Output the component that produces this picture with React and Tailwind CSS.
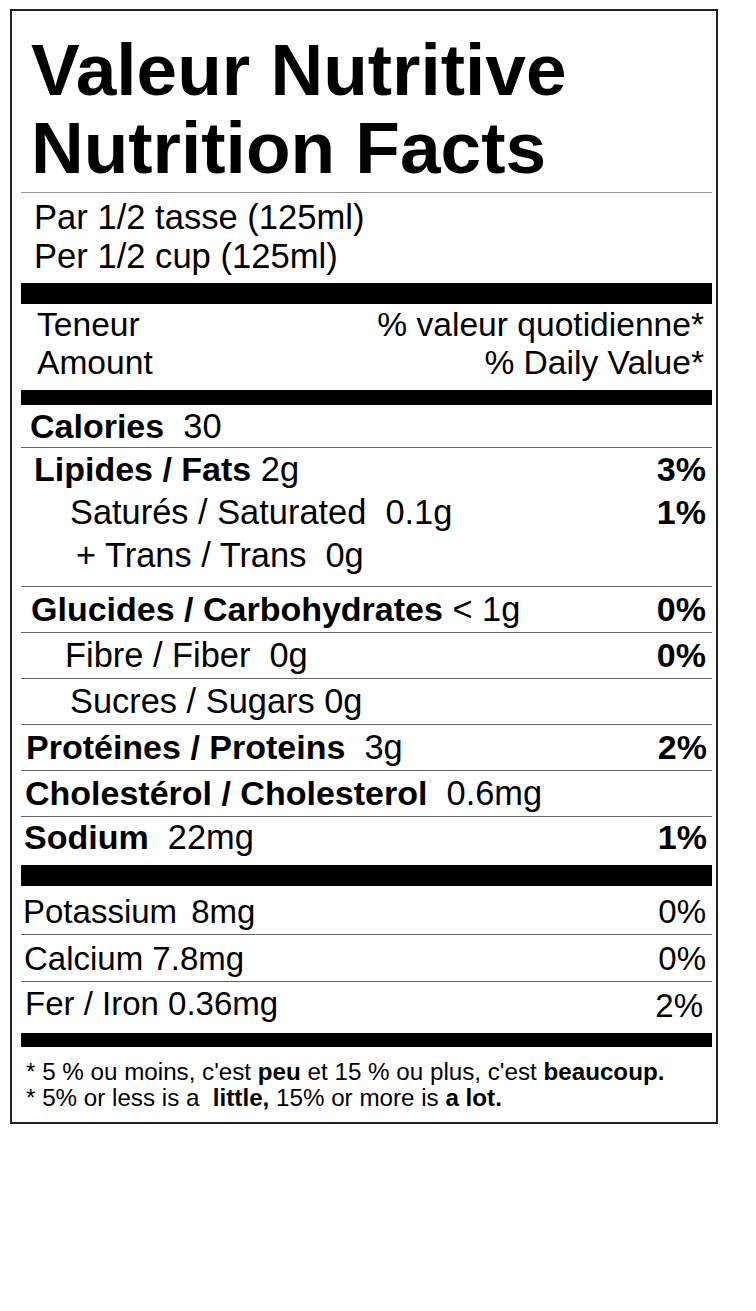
const Bar = ({ h }) => <div className={`bg-black ${h}`} />;

const Row = ({ className = "", children, pct, pctClass = "font-bold text-[34px]", pr = "pr-[6px]" }) => (
  <div className={`flex justify-between whitespace-pre overflow-visible ${className}`}>
    <div>{children}</div>
    {pct && <div className={`${pctClass} ${pr}`}>{pct}</div>}
  </div>
);

const B = ({ children }) => <span className="font-bold text-[34px] leading-none">{children}</span>;

export default function App() {
  return (
    <div className="min-h-[1311px] bg-white pt-[9px] pl-[10px] font-['Liberation_Sans',Arial,sans-serif] text-black">
      <div className="w-[708px] border-2 border-[#222] pl-[9px] pr-[4px]">
        <h1 className="pt-[20px] pl-[10px] text-[73px] font-bold leading-[78px]">
          Valeur Nutritive
          <br />
          Nutrition Facts
        </h1>
        <div className="mt-[5px] h-px bg-[#999]" />
        <div className="mt-[5px] h-[78px] pl-[13px] text-[34.6px] leading-[39px]">
          Par 1/2 tasse (125ml)
          <br />
          Per 1/2 cup (125ml)
        </div>
        <div className="mt-[7px]">
          <Bar h="h-[21px]" />
        </div>

        <div className="mt-[2px] flex h-[76px] justify-between pl-[16px] pr-[8px] text-[33.6px] leading-[38px]">
          <div>
            Teneur
            <br />
            Amount
          </div>
          <div className="text-right">
            % valeur quotidienne*
            <br />
            % Daily Value*
          </div>
        </div>
        <div className="mt-[8px]">
          <Bar h="h-[15px]" />
        </div>

        <div className="text-[34.4px]">
          <Row className="h-[43px] leading-[42px] border-b border-[#666] pl-[9px]">
            <B>Calories</B>
            <span>{"  30"}</span>
          </Row>

          <div className="h-[139px] border-b border-[#666] leading-[43px]">
            <Row className="h-[43px] pl-[13px]" pct="3%">
              <B>Lipides / Fats</B>
              <span>{" 2g"}</span>
            </Row>
            <Row className="h-[43px] pl-[49px]" pct="1%">
              {"Saturés / Saturated  0.1g"}
            </Row>
            <Row className="h-[43px] pl-[55px]">{"+ Trans / Trans  0g"}</Row>
          </div>

          <Row className="h-[46px] leading-[45px] border-b border-[#666] pl-[10px]" pct="0%">
            <B>Glucides / Carbohydrates</B>
            <span>{" < 1g"}</span>
          </Row>
          <Row className="h-[46px] leading-[45px] border-b border-[#666] pl-[44px]" pct="0%">
            {"Fibre / Fiber  0g"}
          </Row>
          <Row className="h-[46px] leading-[45px] border-b border-[#666] pl-[49px]">
            {"Sucres / Sugars 0g"}
          </Row>
          <Row className="h-[46px] leading-[45px] border-b border-[#666] pl-[5px]" pct="2%" pr="pr-[5px]">
            <B>Protéines / Proteins</B>
            <span>{"  3g"}</span>
          </Row>
          <Row className="h-[46px] leading-[45px] border-b border-[#666] pl-[4px]">
            <B>Cholestérol / Cholesterol</B>
            <span>{"  0.6mg"}</span>
          </Row>
          <Row className="h-[48px] leading-[40px] pl-[3px]" pct="1%" pr="pr-[5px]">
            <B>Sodium</B>
            <span>{"  22mg"}</span>
          </Row>
        </div>

        <Bar h="h-[21px]" />

        <div className="text-[33px]">
          <Row className="h-[49px] pt-[3px] leading-[45px] border-b border-[#666] pl-[2px]" pct="0%" pctClass="" pr="pr-[6px]">
            <span>Potassium</span>
            <span className="ml-[5px]">{" 8mg"}</span>
          </Row>
          <Row className="h-[47px] pt-[1px] leading-[45px] border-b border-[#666] pl-[3px]" pct="0%" pctClass="" pr="pr-[6px]">
            {"Calcium 7.8mg"}
          </Row>
          <Row className="h-[51px] pt-[1px] leading-[42px] pl-[4px]" pct="2%" pctClass="pt-[2px]" pr="pr-[9px]">
            {"Fer / Iron 0.36mg"}
          </Row>
        </div>

        <Bar h="h-[14px]" />

        <div className="mt-[12px] h-[63px] pl-[5px] text-[24.2px] leading-[26px] whitespace-pre">
          <div>
            {"* 5 % ou moins, c'est "}
            <b>peu</b>
            {" et 15 % ou plus, c'est "}
            <b>beaucoup.</b>
          </div>
          <div>
            {"* 5% or less is a  "}
            <b>little,</b>
            {" 15% or more is "}
            <b>a lot.</b>
          </div>
        </div>
      </div>
    </div>
  );
}
